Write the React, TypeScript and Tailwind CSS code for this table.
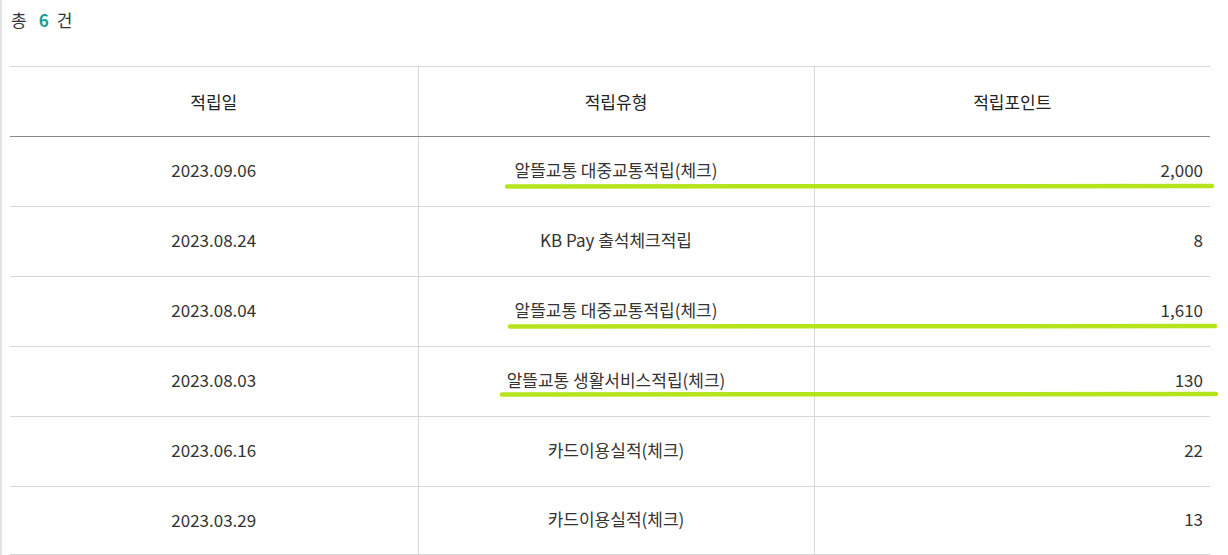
import React from "react";

const rows = [
  { date: "2023.09.06", type: "알뜰교통 대중교통적립(체크)", pt: "2,000" },
  { date: "2023.08.24", type: "KB Pay 출석체크적립", pt: "8" },
  { date: "2023.08.04", type: "알뜰교통 대중교통적립(체크)", pt: "1,610" },
  { date: "2023.08.03", type: "알뜰교통 생활서비스적립(체크)", pt: "130" },
  { date: "2023.06.16", type: "카드이용실적(체크)", pt: "22" },
  { date: "2023.03.29", type: "카드이용실적(체크)", pt: "13" },
];

export default function App() {
  return (
    <div
      className="relative w-[1228px] h-[555px] overflow-hidden bg-white border-l-2 border-[#e4e4e4] pl-[8px] text-[#333]"
      style={{ fontFamily: '"Noto Sans CJK KR", "Noto Sans", sans-serif' }}
    >
      <div className="pt-[8px] h-[32px] flex items-center text-[17px] leading-[24px] text-[#333]">
        <span className="ml-[1px]">총</span>
        <span className="ml-[12px] mr-[8px] font-bold text-[#1a9c93]">6</span>
        <span>건</span>
      </div>
      <table className="mt-[34px] w-[1200px] table-fixed border-collapse">
        <colgroup>
          <col className="w-[408px]" />
          <col className="w-[396px]" />
          <col className="w-[396px]" />
        </colgroup>
        <thead>
          <tr className="border-t border-[#d7d7d7]">
            <th className="h-[70px] p-0 font-normal text-[17px] text-[#222] border-b border-[#8a8a8a]">적립일</th>
            <th className="h-[70px] p-0 font-normal text-[17px] text-[#222] border-b border-l border-b-[#8a8a8a] border-l-[#d7d7d7]">적립유형</th>
            <th className="h-[70px] p-0 font-normal text-[17px] text-[#222] border-b border-l border-b-[#8a8a8a] border-l-[#d7d7d7]">적립포인트</th>
          </tr>
        </thead>
        <tbody>
          {rows.map((r, i) => (
            <tr key={i} className="border-b border-[#d7d7d7]">
              <td className={(i === rows.length - 1 ? "h-[68px] pb-[1px]" : "h-[70px] pb-[3px]") + " p-0 text-center text-[17px]"}>{r.date}</td>
              <td className="p-0 pb-[3px] text-center text-[17px] border-l border-[#d7d7d7]">{r.type}</td>
              <td className="p-0 pb-[3px] pr-[7px] text-right text-[17px] border-l border-[#d7d7d7]">{r.pt}</td>
            </tr>
          ))}
        </tbody>
      </table>
      <svg className="absolute left-[-2px] top-0 pointer-events-none" width="1228" height="555">
        <g stroke="#b6e41c" strokeWidth="4.5" strokeLinecap="round" fill="none">
          <line x1="507" y1="186.5" x2="1212" y2="186" />
          <line x1="510" y1="326.5" x2="1215" y2="326" />
          <line x1="502" y1="394.5" x2="1216" y2="394" />
        </g>
      </svg>
    </div>
  );
}
